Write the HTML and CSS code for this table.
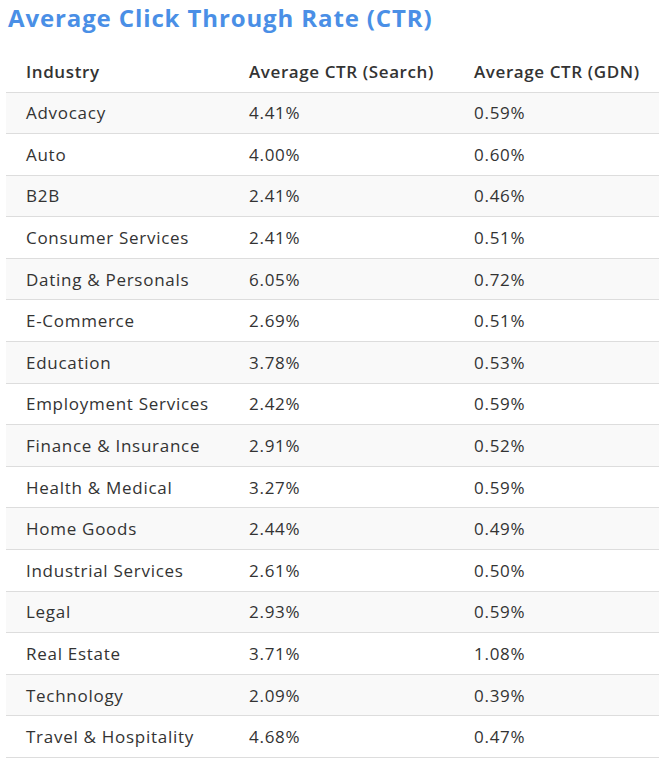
FILE: index.html
```html
<!DOCTYPE html>
<html lang="en">
<head>
<meta charset="utf-8">
<title>Average Click Through Rate (CTR)</title>
<link rel="stylesheet" href="styles.css">
</head>
<body>
<div class="page">
  <h2 class="title">Average Click Through Rate (CTR)</h2>
  <table class="ctr-table">
    <colgroup>
      <col class="c1"><col class="c2"><col class="c3">
    </colgroup>
    <thead>
      <tr><th>Industry</th><th>Average CTR (Search)</th><th>Average CTR (GDN)</th></tr>
    </thead>
    <tbody>
      <tr><td>Advocacy</td><td>4.41%</td><td>0.59%</td></tr>
      <tr><td>Auto</td><td>4.00%</td><td>0.60%</td></tr>
      <tr><td>B2B</td><td>2.41%</td><td>0.46%</td></tr>
      <tr><td>Consumer Services</td><td>2.41%</td><td>0.51%</td></tr>
      <tr><td>Dating &amp; Personals</td><td>6.05%</td><td>0.72%</td></tr>
      <tr><td>E-Commerce</td><td>2.69%</td><td>0.51%</td></tr>
      <tr><td>Education</td><td>3.78%</td><td>0.53%</td></tr>
      <tr><td>Employment Services</td><td>2.42%</td><td>0.59%</td></tr>
      <tr><td>Finance &amp; Insurance</td><td>2.91%</td><td>0.52%</td></tr>
      <tr><td>Health &amp; Medical</td><td>3.27%</td><td>0.59%</td></tr>
      <tr><td>Home Goods</td><td>2.44%</td><td>0.49%</td></tr>
      <tr><td>Industrial Services</td><td>2.61%</td><td>0.50%</td></tr>
      <tr><td>Legal</td><td>2.93%</td><td>0.59%</td></tr>
      <tr><td>Real Estate</td><td>3.71%</td><td>1.08%</td></tr>
      <tr><td>Technology</td><td>2.09%</td><td>0.39%</td></tr>
      <tr><td>Travel &amp; Hospitality</td><td>4.68%</td><td>0.47%</td></tr>
    </tbody>
  </table>
</div>
</body>
</html>
```

FILE: styles.css
```css
html, body {
  margin: 0;
  padding: 0;
  background: #ffffff;
}
.page {
  padding: 0 3px 0 6px;
  font-family: "Open Sans", "Liberation Sans", sans-serif;
  color: #333333;
}
.title {
  margin: 0;
  padding: 2px 0 0 2px;
  height: 52px;
  box-sizing: border-box;
  font-size: 24px;
  line-height: 32px;
  font-weight: 700;
  color: #4a8fe6;
  letter-spacing: 0.88px;
  white-space: nowrap;
}
.ctr-table {
  width: 653px;
  border-collapse: collapse;
  table-layout: fixed;
  font-size: 17px;
  letter-spacing: 0.72px;
}
.c1 { width: 223px; }
.c2 { width: 225px; }
.c3 { width: 205px; }
.ctr-table th {
  text-align: left;
  font-weight: 600;
  padding: 0 0 0 20px;
  height: 40px;
  box-sizing: border-box;
  border-bottom: 1px solid #dddddd;
  vertical-align: middle;
  color: #333333;
  white-space: nowrap;
  letter-spacing: 0.6px;
}
.ctr-table td {
  padding: 0 0 0 20px;
  height: 41.6px;
  box-sizing: border-box;
  border-bottom: 1px solid #dddddd;
  vertical-align: middle;
  white-space: nowrap;
}
.ctr-table tbody tr:nth-child(odd) {
  background: #f9f9f9;
}
```
